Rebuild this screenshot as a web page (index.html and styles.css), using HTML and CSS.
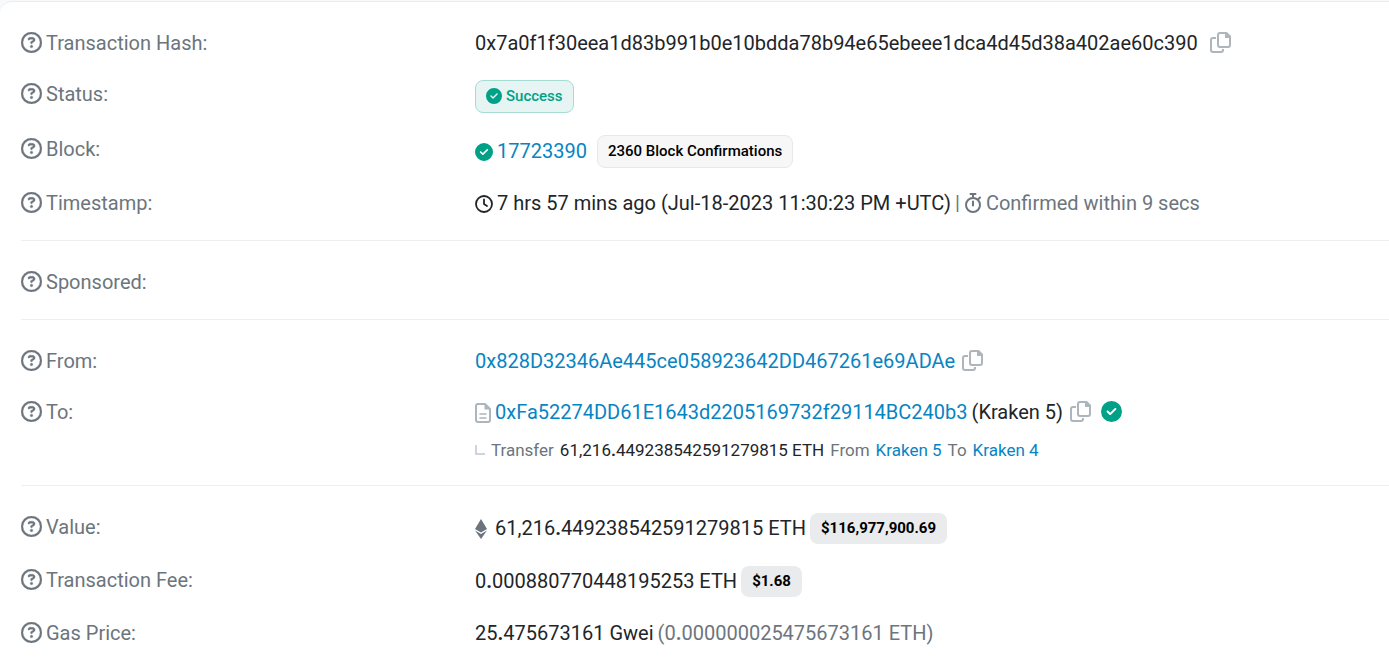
FILE: index.html
```
<!DOCTYPE html>
<html lang="en">
<head>
  <meta charset="UTF-8" />
  <meta name="viewport" content="width=device-width, initial-scale=1.0" />
  <title>Transaction Details</title>
  <link rel="stylesheet" href="styles.css">
</head>
<body>
<!-- Icon set -->
<svg class="sprite" aria-hidden="true">
  <symbol id="i-help" viewBox="0 0 512 512"><path d="M464 256A208 208 0 1 0 48 256a208 208 0 1 0 416 0zM0 256a256 256 0 1 1 512 0A256 256 0 1 1 0 256zm169.8-90.7c7.9-22.3 29.1-37.3 52.8-37.3h58.3c34.9 0 63.1 28.3 63.1 63.1c0 22.6-12.1 43.5-31.7 54.8L280 264.4c-.2 13-10.9 23.6-24 23.6c-13.3 0-24-10.7-24-24V250.5c0-8.6 4.6-16.5 12.1-20.8l44.3-25.4c4.7-2.7 7.6-7.7 7.6-13.1c0-8.4-6.8-15.1-15.1-15.1H222.6c-3.4 0-6.4 2.1-7.5 5.3l-.4 1.2c-4.4 12.5-18.2 19-30.6 14.6s-19-18.2-14.6-30.6l.4-1.2zM224 352a32 32 0 1 1 64 0 32 32 0 1 1 -64 0z" stroke="currentColor" stroke-width="8"/></symbol>
  <symbol id="i-check" viewBox="0 0 512 512"><path d="M256 512A256 256 0 1 0 256 0a256 256 0 1 0 0 512zM369 209L241 337c-9.4 9.4-24.6 9.4-33.9 0l-64-64c-9.4-9.4-9.4-24.6 0-33.9s24.6-9.4 33.9 0l47 47L335 175c9.4-9.4 24.6-9.4 33.9 0s9.4 24.6 0 33.9z"/></symbol>
  <symbol id="i-copy" viewBox="0 0 21 21"><g fill="none" stroke="currentColor" stroke-width="2"><path d="M10 1h6.500L20 4.500V13a2 2 0 0 1-2 2h-8a2 2 0 0 1-2-2V3a2 2 0 0 1 2-2z"/><path d="M6 6H3a2 2 0 0 0-2 2v10a2 2 0 0 0 2 2h8a2 2 0 0 0 2-2v-1"/></g><path d="M15 1h2l3 3v2h-5z"/></symbol>
  <symbol id="i-clock" viewBox="0 0 18 18"><g fill="none" stroke="currentColor" stroke-width="1.800" stroke-linecap="round" stroke-linejoin="round"><circle cx="9" cy="9" r="8"/><path d="M9 4.500V9l3 2"/></g></symbol>
  <symbol id="i-stopwatch" viewBox="0 0 18 20"><g fill="none" stroke="currentColor" stroke-width="2" stroke-linecap="round"><circle cx="9" cy="12" r="7"/><path d="M6.500 1h5M9 1v3M9 8.500v4M14.500 6l1.500-1.500"/></g></symbol>
  <symbol id="i-file" viewBox="0 0 16 20"><g fill="none" stroke="currentColor" stroke-width="2"><path d="M3 1h7l5 5v11a2 2 0 0 1-2 2H3a2 2 0 0 1-2-2V3a2 2 0 0 1 2-2z"/><path d="M5 11h6M5 15h6" stroke-linecap="round" stroke-width="1.600"/></g><path d="M9.500 1v5.500H15z"/></symbol>
  <symbol id="i-eth" viewBox="0 0 12 20"><path d="M6 0l6 10-6 3.500L0 10z"/><path d="M0 11.500l6 3.500 6-3.500L6 20z"/></symbol>
</svg>

<main class="card">
  <section class="group overview">
    <div class="row">
      <div class="label"><svg class="icon"><use href="#i-help"/></svg>Transaction Hash:</div>
      <div class="value">
        <span>0x7a0f1f30eea1d83b991b0e10bdda78b94e65ebeee1dca4d45d38a402ae60c390</span>
        <button class="copy copy-wide" type="button" aria-label="Copy transaction hash"><svg class="icon"><use href="#i-copy"/></svg></button>
      </div>
    </div>
    <div class="row row-badge">
      <div class="label"><svg class="icon"><use href="#i-help"/></svg>Status:</div>
      <div class="value"><span class="badge badge-success"><svg class="icon-xs"><use href="#i-check"/></svg>Success</span></div>
    </div>
    <div class="row row-badge">
      <div class="label"><svg class="icon"><use href="#i-help"/></svg>Block:</div>
      <div class="value">
        <svg class="icon-sm green"><use href="#i-check"/></svg>
        <a href="#">17723390</a>
        <span class="badge badge-light">2360 Block Confirmations</span>
      </div>
    </div>
    <div class="row">
      <div class="label"><svg class="icon"><use href="#i-help"/></svg>Timestamp:</div>
      <div class="value">
        <svg class="icon-sm"><use href="#i-clock"/></svg>
        <span>7 hrs 57 mins ago (Jul-18-2023 11:30:23 PM +UTC)</span>
        <span class="muted">|</span>
        <svg class="stopwatch muted"><use href="#i-stopwatch"/></svg>
        <span class="muted">Confirmed within 9 secs</span>
      </div>
    </div>
  </section>

  <section class="group">
    <div class="row">
      <div class="label"><svg class="icon"><use href="#i-help"/></svg>Sponsored:</div>
    </div>
  </section>

  <section class="group">
    <div class="row">
      <div class="label"><svg class="icon"><use href="#i-help"/></svg>From:</div>
      <div class="value">
        <a href="#">0x828D32346Ae445ce058923642DD467261e69ADAe</a>
        <button class="copy" type="button" aria-label="Copy sender address"><svg class="icon"><use href="#i-copy"/></svg></button>
      </div>
    </div>
    <div class="row">
      <div class="label"><svg class="icon"><use href="#i-help"/></svg>To:</div>
      <div>
        <div class="value">
          <svg class="file"><use href="#i-file"/></svg>
          <a href="#">0xFa52274DD61E1643d2205169732f29114BC240b3</a>
          <span>(Kraken 5)</span>
          <button class="copy" type="button" aria-label="Copy recipient address"><svg class="icon"><use href="#i-copy"/></svg></button>
          <svg class="icon verified green"><use href="#i-check"/></svg>
        </div>
        <div class="transfer">
          <span class="elbow"></span>
          <span class="muted">Transfer</span>
          <span>61,216<b>.</b>449238542591279815 ETH</span>
          <span class="muted">From</span>
          <a href="#">Kraken 5</a>
          <span class="muted">To</span>
          <a href="#">Kraken 4</a>
        </div>
      </div>
    </div>
  </section>

  <section class="group">
    <div class="row">
      <div class="label"><svg class="icon"><use href="#i-help"/></svg>Value:</div>
      <div class="value">
        <svg class="eth"><use href="#i-eth"/></svg>
        <span>61,216<b>.</b>449238542591279815 ETH</span>
        <span class="badge badge-price">$116,977,900.69</span>
      </div>
    </div>
    <div class="row">
      <div class="label"><svg class="icon"><use href="#i-help"/></svg>Transaction Fee:</div>
      <div class="value">
        <span>0<b>.</b>000880770448195253 ETH</span>
        <span class="badge badge-price">$1.68</span>
      </div>
    </div>
    <div class="row">
      <div class="label"><svg class="icon"><use href="#i-help"/></svg>Gas Price:</div>
      <div class="value">
        <span>25<b>.</b>475673161 Gwei</span>
        <span class="muted">(0<b>.</b>000000025475673161 ETH)</span>
      </div>
    </div>
  </section>
</main>
</body>
</html>
```
FILE: styles.css
```
* { box-sizing: border-box; }
body {
  margin: 0;
  padding-top: 1px;
  font-family: Roboto, "Liberation Sans", sans-serif;
  font-size: 20px;
  line-height: 29px;
  background: #f8f9fa;
  color: #212529;
}
a { color: #0784c3; text-decoration: none; }
svg { fill: currentColor; flex: none; overflow: visible; }
.sprite { display: none; }
.muted { color: #6c757d; }
.green { color: #00a186; }

.card { min-height: calc(100vh - 1px); background: #fff; border-top: 1px solid #e9ecef; border-radius: 12px 0 0 0; padding-left: 21px; }

/* Rows */
.group { display: grid; gap: 22px; padding: 27px 0 22px; border-bottom: 1px solid #edeff1; }
.group:last-child { border-bottom: 0; padding-bottom: 0; }
.overview { gap: 21px; }
.row { display: grid; grid-template-columns: 1fr 2fr; align-items: start; padding-right: 6px; }
.row-badge { padding-top: 1px; }
.label { display: flex; align-items: center; gap: 4px; color: #6c757d; }
.value { display: flex; align-items: center; gap: 4px; white-space: nowrap; }

/* Icons */
.icon { width: 21px; height: 21px; margin-bottom: 2px; }
.icon-sm { width: 18px; height: 18px; }
.icon-xs { width: 16px; height: 16px; margin-bottom: 1px; }
.stopwatch { width: 18px; height: 20px; margin-bottom: 2px; }
.file { width: 16px; height: 20px; color: #adb5bd; }
.eth { width: 12px; height: 20px; margin-right: 4px; color: #6c757d; }
.verified { margin-left: 6px; }
.copy { display: flex; margin: 0 0 0 3px; padding: 0; border: 0; background: none; color: #adb5bd; cursor: pointer; }
.copy-wide { margin-left: 8px; }

/* Badges */
.badge { display: flex; align-items: center; gap: 4px; padding: 5px 11px; border-radius: 8px; font-size: 15px; line-height: 21px; font-weight: 500; color: #000; }
.badge-success { border: 1px solid #a6ddd3; padding: 5px 10px; background: #e6f5f3; color: #00a186; }
.badge-light { border: 1px solid #e6e8ea; padding: 5px 10px; margin-left: 6px; background: #f7f7f8; }
.badge-price { background: #e9ebed; font-weight: 700; }

/* Internal transfer line */
.transfer { display: flex; align-items: center; gap: 6px; margin-top: 10px; font-size: 17px; line-height: 26px; white-space: nowrap; }
.elbow { width: 10px; height: 10px; border: solid #ced4da; border-width: 0 0 2px 2px; }
```
